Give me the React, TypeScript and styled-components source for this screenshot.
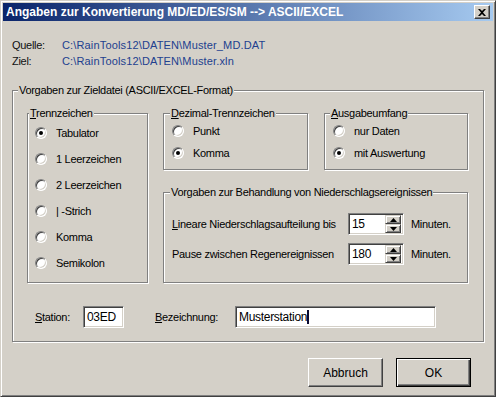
import React from 'react'
import styled, { createGlobalStyle } from 'styled-components'

const GlobalStyle = createGlobalStyle`
  html, body {
    margin: 0;
    padding: 0;
    background: #D4D0C8;
  }
  body {
    font-family: "Liberation Sans", Arial, sans-serif;
    font-size: 11px;
    letter-spacing: -0.3px;
    color: #000;
  }
  * {
    box-sizing: border-box;
  }
`

const Window = styled.div`
  width: 496px;
  height: 397px;
  background: #D4D0C8;
  border: 1px solid;
  border-color: #D4D0C8 #404040 #404040 #D4D0C8;
  box-shadow: inset 1px 1px 0 #fff, inset -1px -1px 0 #808080;
  padding: 2px;
  display: flex;
  flex-direction: column;
`

const TitleBar = styled.div`
  height: 18px;
  flex-shrink: 0;
  display: flex;
  align-items: center;
  padding: 0 3px 0 3px;
  background: linear-gradient(to right, #0A246A, #A6CAF0);
`

const TitleText = styled.span`
  color: #fff;
  font-weight: bold;
  font-size: 12px;
  letter-spacing: 0;
  white-space: nowrap;
`

const CloseButton = styled.div`
  margin-left: auto;
  width: 16px;
  height: 14px;
  background: #D4D0C8;
  border: 1px solid;
  border-color: #fff #404040 #404040 #fff;
  box-shadow: inset -1px -1px 0 #808080;
  display: flex;
  align-items: center;
  justify-content: center;
`

const Body = styled.div`
  display: flex;
  flex-direction: column;
  padding: 16px 9px 0 9px;
`

const InfoGrid = styled.div`
  display: grid;
  grid-template-columns: 50px 1fr;
  grid-auto-rows: 16px;
  line-height: 16px;
`

const InfoLabel = styled.span`
  color: #111;
`

const InfoValue = styled.span`
  color: #22408F;
  letter-spacing: 0.15px;
`

const MainWrap = styled.div`
  margin-top: 21px;
`

const GroupBox = styled.div<{ $w?: number; $h: number }>`
  position: relative;
  width: ${p => (p.$w ? `${p.$w}px` : '100%')};
  height: ${p => p.$h}px;
  flex-shrink: 0;
  border: 1px solid #808080;
  box-shadow: inset 1px 1px 0 #fff, 1px 1px 0 #fff;
`

const Caption = styled.span<{ $indent: number }>`
  position: absolute;
  top: -7px;
  left: ${p => p.$indent}px;
  padding: 0 1px;
  line-height: 13px;
  background: #D4D0C8;
  white-space: nowrap;
`

const MainInner = styled.div`
  padding: 22px 0 0 14px;
  display: flex;
  flex-direction: column;
`

const Columns = styled.div`
  display: flex;
  column-gap: 15px;
`

const RightColumn = styled.div`
  display: flex;
  flex-direction: column;
  row-gap: 22px;
`

const TopRow = styled.div`
  display: flex;
  column-gap: 16px;
`

const RadioList = styled.div<{ $pad: number }>`
  display: flex;
  flex-direction: column;
  padding: 6px 0 0 ${p => p.$pad}px;
`

const RadioRow = styled.label<{ $h: number }>`
  display: flex;
  align-items: center;
  height: ${p => p.$h}px;
  column-gap: 9px;
  white-space: nowrap;
`

const RadioCircle = styled.span<{ $checked?: boolean }>`
  position: relative;
  width: 12px;
  height: 12px;
  flex-shrink: 0;
  border-radius: 50%;
  background: #fff;
  border: 1px solid;
  border-color: #808080 #fff #fff #808080;
  box-shadow: inset 1px 1px 0 #404040, inset -1px -1px 0 #D4D0C8;

  &::after {
    content: '';
    display: ${p => (p.$checked ? 'block' : 'none')};
    position: absolute;
    left: 3px;
    top: 3px;
    width: 4px;
    height: 4px;
    border-radius: 50%;
    background: #000;
  }
`

const SpinGrid = styled.div`
  display: grid;
  grid-template-columns: 169px 56px auto;
  grid-auto-rows: 22px;
  row-gap: 8px;
  column-gap: 7px;
  align-items: center;
  padding: 20px 0 0 8px;
  white-space: nowrap;
`

const Sunken = styled.div<{ $w: number }>`
  width: ${p => p.$w}px;
  height: 22px;
  background: #fff;
  border: 1px solid;
  border-color: #808080 #fff #fff #808080;
  box-shadow: inset 1px 1px 0 #404040, inset -1px -1px 0 #D4D0C8;
  padding: 2px 2px 2px 3px;
  display: flex;
  align-items: center;
  line-height: 16px;
  font-size: 12px;
  white-space: nowrap;
`

const SpinButtons = styled.div`
  margin-left: auto;
  display: flex;
  flex-direction: column;
  width: 16px;
  height: 18px;
`

const SpinButton = styled.div`
  flex: 1;
  background: #D4D0C8;
  border: 1px solid;
  border-color: #D4D0C8 #404040 #404040 #D4D0C8;
  box-shadow: inset 1px 1px 0 #fff, inset -1px -1px 0 #808080;
  display: flex;
  align-items: center;
  justify-content: center;
`

const StationRow = styled.div`
  display: flex;
  align-items: center;
  margin-top: 23px;
  padding-left: 8px;
`

const FieldLabel = styled.span<{ $w: number; $gap?: number }>`
  width: ${p => p.$w}px;
  margin-left: ${p => p.$gap ?? 0}px;
  flex-shrink: 0;
  white-space: nowrap;
`

const Caret = styled.span`
  display: inline-block;
  width: 2px;
  height: 14px;
  background: #0A0A30;
`

const ButtonRow = styled.div`
  display: flex;
  justify-content: flex-end;
  column-gap: 13px;
  margin-top: 16px;
  padding-right: 13px;
`

const PushButton = styled.div<{ $default?: boolean }>`
  width: 75px;
  height: 29px;
  display: flex;
  align-items: center;
  justify-content: center;
  font-size: 12px;
  letter-spacing: 0;
  background: #D4D0C8;
  border: 1px solid;
  border-color: ${p => (p.$default ? '#000' : '#fff #404040 #404040 #fff')};
  box-shadow: ${p =>
    p.$default
      ? 'inset 1px 1px 0 #fff, inset -1px -1px 0 #404040, inset -2px -2px 0 #808080'
      : 'inset -1px -1px 0 #808080'};
`

const Radio = ({ label, checked, h }: { label: React.ReactNode; checked?: boolean; h: number }) => (
  <RadioRow $h={h}>
    <RadioCircle $checked={checked} />
    <span>{label}</span>
  </RadioRow>
)

const Spin = ({ value }: { value: string }) => (
  <Sunken $w={56}>
    <span>{value}</span>
    <SpinButtons>
      <SpinButton>
        <svg width="7" height="4" viewBox="0 0 7 4"><path d="M3.5 0 L7 4 L0 4 Z" fill="#000" /></svg>
      </SpinButton>
      <SpinButton>
        <svg width="7" height="4" viewBox="0 0 7 4"><path d="M0 0 L7 0 L3.5 4 Z" fill="#000" /></svg>
      </SpinButton>
    </SpinButtons>
  </Sunken>
)

export default function App() {
  return (
    <>
      <GlobalStyle />
      <Window>
        <TitleBar>
          <TitleText>Angaben zur Konvertierung MD/ED/ES/SM --&gt; ASCII/EXCEL</TitleText>
          <CloseButton>
            <svg width="8" height="7" viewBox="0 0 8 7">
              <path d="M0 0 L2 0 L4 2 L6 0 L8 0 L5 3.5 L8 7 L6 7 L4 5 L2 7 L0 7 L3 3.5 Z" fill="#000" />
            </svg>
          </CloseButton>
        </TitleBar>
        <Body>
          <InfoGrid>
            <InfoLabel>Quelle:</InfoLabel>
            <InfoValue>C:\RainTools12\DATEN\Muster_MD.DAT</InfoValue>
            <InfoLabel>Ziel:</InfoLabel>
            <InfoValue>C:\RainTools12\DATEN\Muster.xln</InfoValue>
          </InfoGrid>

          <MainWrap>
            <GroupBox $h={252}>
              <Caption $indent={5}>Vorgaben zur Zieldatei (ASCII/EXCEL-Format)</Caption>
              <MainInner>
                <Columns>
                  <GroupBox $w={121} $h={170}>
                    <Caption $indent={1}><u>T</u>rennzeichen</Caption>
                    <RadioList $pad={7}>
                      <Radio h={26} checked label="Tabulator" />
                      <Radio h={26} label="1 Leerzeichen" />
                      <Radio h={26} label="2 Leerzeichen" />
                      <Radio h={26} label="| -Strich" />
                      <Radio h={26} label="Komma" />
                      <Radio h={26} label="Semikolon" />
                    </RadioList>
                  </GroupBox>
                  <RightColumn>
                    <TopRow>
                      <GroupBox $w={145} $h={57}>
                        <Caption $indent={6}><u>D</u>ezimal-Trennzeichen</Caption>
                        <RadioList $pad={8}>
                          <Radio h={22} label="Punkt" />
                          <Radio h={22} checked label="Komma" />
                        </RadioList>
                      </GroupBox>
                      <GroupBox $w={144} $h={57}>
                        <Caption $indent={5}><u>A</u>usgabeumfang</Caption>
                        <RadioList $pad={8}>
                          <Radio h={22} label="nur Daten" />
                          <Radio h={22} checked label="mit Auswertung" />
                        </RadioList>
                      </GroupBox>
                    </TopRow>
                    <GroupBox $w={305} $h={91}>
                      <Caption $indent={6}>Vorgaben zur Behandlung von Niederschlagsereignissen</Caption>
                      <SpinGrid>
                        <span><u>L</u>ineare Niederschlagsaufteilung bis</span>
                        <Spin value="15" />
                        <span>Minuten.</span>
                        <span>Pause zwischen Regenereignissen</span>
                        <Spin value="180" />
                        <span>Minuten.</span>
                      </SpinGrid>
                    </GroupBox>
                  </RightColumn>
                </Columns>
                <StationRow>
                  <FieldLabel $w={48}><u>S</u>tation:</FieldLabel>
                  <Sunken $w={41}>03ED</Sunken>
                  <FieldLabel $w={80} $gap={31}><u>B</u>ezeichnung:</FieldLabel>
                  <Sunken $w={201}>Musterstation<Caret /></Sunken>
                </StationRow>
              </MainInner>
            </GroupBox>
          </MainWrap>

          <ButtonRow>
            <PushButton>Abbruch</PushButton>
            <PushButton $default>OK</PushButton>
          </ButtonRow>
        </Body>
      </Window>
    </>
  )
}
